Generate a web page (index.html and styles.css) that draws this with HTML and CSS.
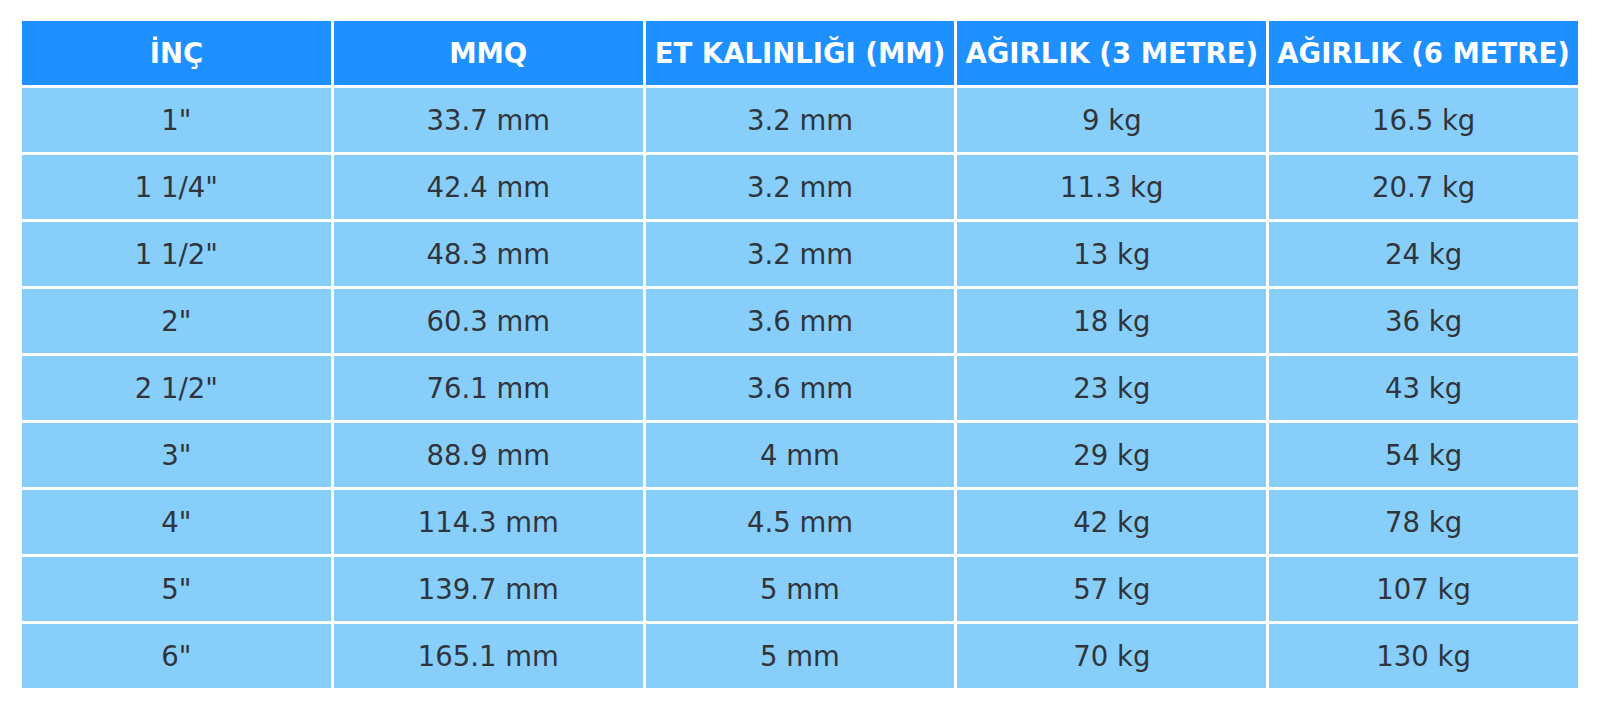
FILE: index.html
```html
<!DOCTYPE html>
<html lang="tr">
<head>
<meta charset="utf-8">
<title>Boru Tablosu</title>
<link rel="stylesheet" href="styles.css">
</head>
<body>
<table class="spec-table">
  <thead>
    <tr>
      <th>İnç</th>
      <th>MMQ</th>
      <th>Et Kalınlığı (mm)</th>
      <th>Ağırlık (3 metre)</th>
      <th>Ağırlık (6 metre)</th>
    </tr>
  </thead>
  <tbody>
    <tr><td>1"</td><td>33.7 mm</td><td>3.2 mm</td><td>9 kg</td><td>16.5 kg</td></tr>
    <tr><td>1 1/4"</td><td>42.4 mm</td><td>3.2 mm</td><td>11.3 kg</td><td>20.7 kg</td></tr>
    <tr><td>1 1/2"</td><td>48.3 mm</td><td>3.2 mm</td><td>13 kg</td><td>24 kg</td></tr>
    <tr><td>2"</td><td>60.3 mm</td><td>3.6 mm</td><td>18 kg</td><td>36 kg</td></tr>
    <tr><td>2 1/2"</td><td>76.1 mm</td><td>3.6 mm</td><td>23 kg</td><td>43 kg</td></tr>
    <tr><td>3"</td><td>88.9 mm</td><td>4 mm</td><td>29 kg</td><td>54 kg</td></tr>
    <tr><td>4"</td><td>114.3 mm</td><td>4.5 mm</td><td>42 kg</td><td>78 kg</td></tr>
    <tr><td>5"</td><td>139.7 mm</td><td>5 mm</td><td>57 kg</td><td>107 kg</td></tr>
    <tr><td>6"</td><td>165.1 mm</td><td>5 mm</td><td>70 kg</td><td>130 kg</td></tr>
  </tbody>
</table>
</body>
</html>
```
FILE: styles.css
```css
html, body {
  margin: 0;
  background: #ffffff;
}
body {
  padding: 18px 19px;
  font-family: "DejaVu Sans", sans-serif;
}
.spec-table {
  width: 100%;
  table-layout: fixed;
  border-collapse: separate;
  border-spacing: 3px;
  font-size: 27.5px;
}
.spec-table th,
.spec-table td {
  height: 64px;
  padding: 0 4px;
  text-align: center;
  vertical-align: middle;
  box-sizing: border-box;
  white-space: nowrap;
}
.spec-table th {
  background: #1e90ff;
  color: #ffffff;
  font-weight: bold;
  text-transform: uppercase;
}
.spec-table td {
  background: #87cefa;
  color: #2f353b;
}
```
